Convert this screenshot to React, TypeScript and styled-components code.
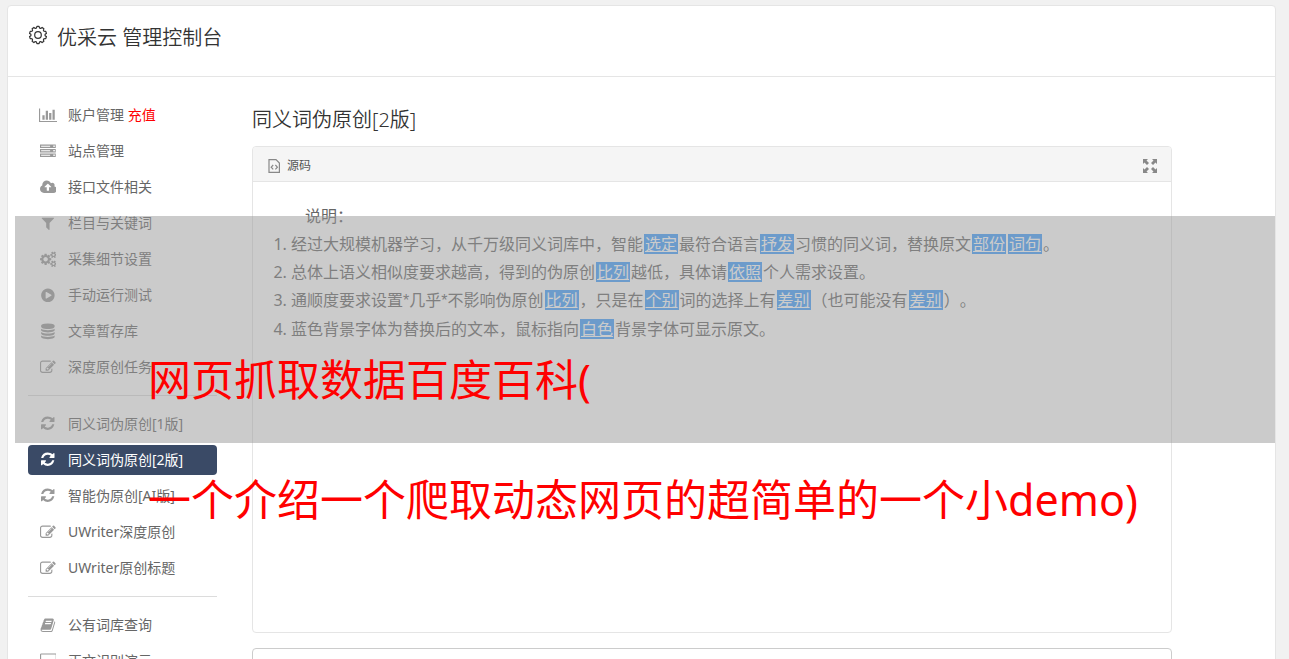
import React from "react";
import styled, { createGlobalStyle, css } from "styled-components";

const GlobalStyle = createGlobalStyle`
  * { box-sizing: border-box; }
  html { height: 100%; overflow: hidden; }
  body {
    margin: 0;
    height: 100%;
    background: #f1f1f1;
    color: #666;
    font: 14px/20px "Noto Sans", "Noto Sans CJK SC", sans-serif;
    text-spacing-trim: space-all;
  }
  h1, h2, p, ul, ol { margin: 0; padding: 0; }
`;

const Page = styled.div`
  position: relative;
  padding: 5px 13px 0 7px;
`;

const Shell = styled.div`
  background: #fff;
  border: 1px solid #e5e5e5;
  border-radius: 4px;
`;

const Header = styled.header`
  display: flex;
  align-items: flex-start;
  gap: 9px;
  padding: 19px 20px 0;
  height: 71px;
  border-bottom: 1px solid #e5e5e5;
  color: #333;
`;

const HeaderTitle = styled.h1`
  font-size: 20px;
  font-weight: 350;
  line-height: 26px;
`;

const Body = styled.div`
  display: flex;
  gap: 35px;
  padding: 20px 103px 0 20px;
`;

const Sidebar = styled.nav`
  flex: 0 0 189px;
`;

const NavGroup = styled.ul`
  display: flex;
  flex-direction: column;
  gap: 6px;
  list-style: none;
  padding: 3px 0 13px;

  & + & {
    border-top: 1px solid #dcdcdc;
    padding-top: 13px;
  }
`;

const NavLink = styled.a<{ $active?: boolean }>`
  display: flex;
  align-items: center;
  gap: 10px;
  height: 30px;
  padding: 0 10px;
  border-radius: 4px;
  color: #666;
  text-decoration: none;
  white-space: nowrap;
  svg { color: #999; }
  ${(p) =>
    p.$active &&
    css`
      background: #3a4a66;
      color: #fff;
      svg { color: #fff; }
    `}
`;

const Recharge = styled.span`
  color: #f00;
`;

const IconBox = styled.span`
  display: flex;
  justify-content: center;
  width: 20px;
`;

const Main = styled.main`
  flex: 1;
  min-width: 0;
  padding-top: 10px;
`;

const PageTitle = styled.h2`
  color: #333;
  font-size: 20px;
  font-weight: 350;
  line-height: 26px;
`;

const Panel = styled.section`
  margin-top: 13px;
  border: 1px solid #e5e5e5;
  border-radius: 4px;
`;

const PanelBar = styled.div`
  display: flex;
  align-items: center;
  justify-content: space-between;
  height: 35px;
  padding: 3px 14px 0;
  background: #f5f5f5;
  border-bottom: 1px solid #e5e5e5;
  border-radius: 3px 3px 0 0;
`;

const BarButton = styled.button`
  display: flex;
  align-items: center;
  gap: 6px;
  border: 0;
  padding: 0;
  background: none;
  color: #555;
  font: inherit;
  font-size: 12px;
  svg { color: #888; }
`;

const Article = styled.div`
  min-height: 450px;
  padding: 20px 20px 0;
  font-size: 16px;
  line-height: 28px;
`;

const Lead = styled.p`
  text-indent: 2em;
`;

const Rules = styled.ol`
  padding-left: 18px;
`;

const Star = styled.span`
  font-family: "Liberation Sans", sans-serif;
`;

const Swap = styled.u`
  margin: 0 1px;
  padding: 0 1px;
  background: #409eff;
  color: #fff;
  line-height: 20px;
  display: inline-block;
`;

const ResultBox = styled.textarea`
  display: block;
  width: 100%;
  height: 120px;
  margin-top: 15px;
  border: 1px solid #ccc;
  border-radius: 4px;
  resize: none;
`;

const Veil = styled.div`
  position: absolute;
  top: 216px;
  left: 15px;
  right: 14px;
  height: 227px;
  background: rgba(151, 151, 151, 0.5);
  pointer-events: none;
`;

const Caption = styled.p`
  position: absolute;
  top: 320px;
  left: 148px;
  color: #f00;
  font-size: 43px;
  line-height: 120px;
  white-space: nowrap;
  pointer-events: none;
`;

type Glyph = { w: number; d: string };

const glyphs: Record<string, Glyph> = {
  chart: { w: 2048, d: "M640 896v512h-256v-512h256zm384-512v1024h-256v-1024h256zm1024 1152v128h-2048v-1536h128v1408h1920zm-640-896v768h-256v-768h256zm384-384v1152h-256v-1152h256z" },
  server: { w: 1792, d: "M128 1408h1024v-128h-1024v128zm0-512h1024v-128h-1024v128zm1568 448q0-40-28-68t-68-28-68 28-28 68 28 68 68 28 68-28 28-68zm-1568-960h1024v-128h-1024v128zm1568 448q0-40-28-68t-68-28-68 28-28 68 28 68 68 28 68-28 28-68zm0-512q0-40-28-68t-68-28-68 28-28 68 28 68 68 28 68-28 28-68zm96 832v384h-1792v-384h1792zm0-512v384h-1792v-384h1792zm0-512v384h-1792v-384h1792z" },
  cloud: { w: 1920, d: "M1280 864q0-14-9-23l-352-352q-9-9-23-9t-23 9l-351 351q-10 12-10 24 0 14 9 23t23 9h224v352q0 13 9.500 22.500t22.500 9.500h192q13 0 22.500-9.500t9.500-22.500v-352h224q13 0 22.500-9.500t9.500-22.500zm640 288q0 159-112.500 271.500t-271.500 112.500h-1088q-185 0-316.500-131.500t-131.500-316.500q0-130 70-240t188-165q-2-30-2-43 0-212 150-362t362-150q156 0 285.500 87t188.500 231q71-62 166-62 106 0 181 75t75 181q0 76-41 138 130 31 213.500 135.500t83.500 238.500z" },
  filter: { w: 1792, d: "M1595 295q17 41-14 70l-493 493v742q0 42-39 59-13 5-25 5-27 0-45-19l-256-256q-19-19-19-45v-486l-493-493q-31-29-14-70 17-39 59-39h1280q42 0 59 39z" },
  cogs: { w: 1920, d: "M896 896q0-106-75-181t-181-75-181 75-75 181 75 181 181 75 181-75 75-181zm768 512q0-52-38-90t-90-38-90 38-38 90q0 53 37.500 90.500t90.500 37.500 90.500-37.500 37.500-90.500zm0-1024q0-52-38-90t-90-38-90 38-38 90q0 53 37.500 90.500t90.500 37.500 90.500-37.500 37.500-90.500zm-384 421v185q0 10-7 19.500t-16 10.500l-155 24q-11 35-32 76 34 48 90 115 7 11 7 20 0 12-7 19-23 30-82.500 89.500t-78.500 59.500q-11 0-21-7l-115-90q-37 19-77 31-11 108-23 155-7 24-30 24h-186q-11 0-20-7.500t-10-17.500l-23-153q-34-10-75-31l-118 89q-7 7-20 7-11 0-21-8-144-133-144-160 0-9 7-19 10-14 41-53t47-61q-23-44-35-82l-152-24q-10-1-17-9.500t-7-19.500v-185q0-10 7-19.500t16-10.500l155-24q11-35 32-76-34-48-90-115-7-11-7-20 0-12 7-20 22-30 82-89t79-59q11 0 21 7l115 90q34-18 77-32 11-108 23-154 7-24 30-24h186q11 0 20 7.500t10 17.500l23 153q34 10 75 31l118-89q8-7 20-7 11 0 21 8 144 133 144 160 0 8-7 19-12 16-42 54t-45 60q23 48 34 82l152 23q10 2 17 10.500t7 19.500zm640 533v140q0 16-149 31-12 27-30 52 51 113 51 138 0 4-4 7-122 71-124 71-8 0-46-47t-52-68q-20 2-30 2t-30-2q-14 21-52 68t-46 47q-2 0-124-71-4-3-4-7 0-25 51-138-18-25-30-52-149-15-149-31v-140q0-16 149-31 13-29 30-52-51-113-51-138 0-4 4-7 4-2 35-20t59-34 30-16q8 0 46 46.500t52 67.500q20-2 30-2t30 2q51-71 92-112l6-2q4 0 124 70 4 3 4 7 0 25-51 138 17 23 30 52 149 15 149 31zm0-1024v140q0 16-149 31-12 27-30 52 51 113 51 138 0 4-4 7-122 71-124 71-8 0-46-47t-52-68q-20 2-30 2t-30-2q-14 21-52 68t-46 47q-2 0-124-71-4-3-4-7 0-25 51-138-18-25-30-52-149-15-149-31v-140q0-16 149-31 13-29 30-52-51-113-51-138 0-4 4-7 4-2 35-20t59-34 30-16q8 0 46 46.500t52 67.500q20-2 30-2t30 2q51-71 92-112l6-2q4 0 124 70 4 3 4 7 0 25-51 138 17 23 30 52 149 15 149 31z" },
  play: { w: 1792, d: "M896 128q209 0 385.500 103t279.500 279.500 103 385.500-103 385.500-279.500 279.500-385.500 103-385.500-103-279.500-279.500-103-385.500 103-385.500 279.500-279.500 385.500-103zm384 823q32-18 32-55t-32-55l-544-320q-31-19-64-1-32 19-32 56v640q0 37 32 56 16 8 32 8 17 0 32-9z" },
  database: { w: 1792, d: "M896 768q237 0 443-43t325-127v170q0 69-103 128t-280 93.500-385 34.500-385-34.500-280-93.500-103-128v-170q119 84 325 127t443 43zm0 768q237 0 443-43t325-127v170q0 69-103 128t-280 93.500-385 34.500-385-34.500-280-93.500-103-128v-170q119 84 325 127t443 43zm0-384q237 0 443-43t325-127v170q0 69-103 128t-280 93.500-385 34.500-385-34.500-280-93.500-103-128v-170q119 84 325 127t443 43zm0-1152q208 0 385 34.500t280 93.500 103 128v128q0 69-103 128t-280 93.500-385 34.500-385-34.500-280-93.500-103-128v-128q0-69 103-128t280-93.500 385-34.500z" },
  edit: { w: 1792, d: "M888 1184l116-116-152-152-116 116v56h96v96h56zm440-720q-16-16-33 1l-350 350q-17 17-1 33t33-1l350-350q17-17 1-33zm80 594v190q0 119-84.500 203.500t-203.500 84.500h-832q-119 0-203.500-84.500t-84.500-203.500v-832q0-119 84.500-203.500t203.500-84.500h832q63 0 117 25 15 7 18 23 3 17-9 29l-49 49q-14 14-32 8-23-6-45-6h-832q-66 0-113 47t-47 113v832q0 66 47 113t113 47h832q66 0 113-47t47-113v-126q0-13 9-22l64-64q15-15 35-7t20 29zm-96-738l288 288-672 672h-288v-288zm444 132l-92 92-288-288 92-92q28-28 68-28t68 28l152 152q28 28 28 68t-28 68z" },
  refresh: { w: 1536, d: "M1511 928q0 5-1 7-64 268-268 434.500t-478 166.500q-146 0-282.500-55t-243.500-157l-129 129q-19 19-45 19t-45-19-19-45v-448q0-26 19-45t45-19h448q26 0 45 19t19 45-19 45l-137 137q71 66 161 102t187 36q134 0 250-65t186-179q11-17 53-117 8-23 30-23h192q13 0 22.500 9.500t9.500 22.500zm25-800v448q0 26-19 45t-45 19h-448q-26 0-45-19t-19-45 19-45l138-138q-148-137-349-137-134 0-250 65t-186 179q-11 17-53 117-8 23-30 23h-199q-13 0-22.500-9.500t-9.500-22.500v-7q65-268 270-434.500t480-166.500q146 0 284 55.500t245 156.500l130-129q19-19 45-19t45 19 19 45z" },
  book: { w: 1792, d: "M1703 478q40 57 18 129l-275 906q-19 64-76.500 107.500t-122.500 43.500h-923q-77 0-148.500-53.500t-99.500-131.500q-24-67-2-127 0-4 3-27t4-37q1-8-3-21.500t-3-19.500q2-11 8-21t16.500-23.500 16.500-23.500q23-38 45-91.500t30-91.500q3-10 .5-30t-.5-28q3-11 17-28t17-23q21-36 42-92t25-90q1-9-2.500-32t.5-28q4-13 22-30.500t22-22.500q19-26 42.500-84.500t27.500-96.500q1-8-3-25.500t-2-26.500q2-8 9-18t18-23 17-21q8-12 16.500-30.500t15-35 16-36 19.500-32 26.500-23.500 36-11.500 47.500 5.500l-1 3q38-9 51-9h761q74 0 114 56t18 130l-274 906q-36 119-71.500 153.500t-128.500 34.500h-869q-27 0-38 15-11 16-1 43 24 70 144 70h923q29 0 56-15.500t35-41.500l300-987q7-22 5-57 38 15 59 43zm-1064 2q-4 13 2 22.500t20 9.500h608q13 0 25.500-9.500t16.500-22.500l21-64q4-13-2-22.500t-20-9.500h-608q-13 0-25.500 9.500t-16.500 22.500zm-83 256q-4 13 2 22.500t20 9.500h608q13 0 25.500-9.500t16.500-22.500l21-64q4-13-2-22.500t-20-9.500h-608q-13 0-25.500 9.500t-16.500 22.500z" },
  desktop: { w: 1920, d: "M1792 992v-832q0-13-9.500-22.500t-22.500-9.500h-1600q-13 0-22.500 9.500t-9.500 22.500v832q0 13 9.500 22.500t22.500 9.500h1600q13 0 22.500-9.500t9.500-22.500zm128-832v1088q0 66-47 113t-113 47h-544q0 37 16 77.500t32 71 16 43.500q0 26-19 45t-45 19h-512q-26 0-45-19t-19-45q0-14 16-44t32-70 16-78h-544q-66 0-113-47t-47-113v-1088q0-66 47-113t113-47h1600q66 0 113 47t47 113z" },
};

const Icon = ({ name }: { name: string }) => {
  const g = glyphs[name];
  return (
    <svg width={(g.w * 18) / 2048} height="18" viewBox={`0 -160 ${g.w} 2048`} fill="currentColor" aria-hidden="true">
      <path d={g.d} />
    </svg>
  );
};

const teeth = Array.from({ length: 10 }, (_, i) => {
  const at = (deg: number, r: number) => {
    const a = (deg * Math.PI) / 180;
    return `${(10 + r * Math.sin(a)).toFixed(2)} ${(10 - r * Math.cos(a)).toFixed(2)}`;
  };
  const c = i * 36;
  return `${i ? "L" : "M"}${at(c - 7, 8.6)}L${at(c + 7, 8.6)}Q${at(c + 18, 5.4)} ${at(c + 29, 8.6)}`;
}).join("");

const GearIcon = () => (
  <svg width="20" height="20" viewBox="0 0 20 20" fill="none" stroke="currentColor" strokeWidth="1.2" strokeLinejoin="round" aria-hidden="true">
    <path d={teeth + "Z"} />
    <circle cx="10" cy="10" r="3.3" />
  </svg>
);

const SourceIcon = () => (
  <svg width="14" height="14" viewBox="0 0 14 14" fill="none" stroke="currentColor" strokeWidth="1.2" aria-hidden="true">
    <path d="M2 .6h7L12.400 4v9.400H2z M6.200 6L4.200 8.200l2 2.200M8.400 6l2 2.200-2 2.200" />
  </svg>
);

const ExpandIcon = () => (
  <svg width="14" height="14" viewBox="0 0 14 14" fill="currentColor" aria-hidden="true">
    <path d="M0 0h5L3.500 1.500l2.500 2.500-2 2L1.500 3.500 0 5zM14 0v5l-1.500-1.500L10 6 8 4l2.500-2.500L9 0zM0 14V9l1.500 1.500L4 8l2 2-2.500 2.500L5 14zM14 14H9l1.500-1.500L8 10l2-2 2.500 2.500L14 9z" />
  </svg>
);

type Item = { icon: string; label: string; extra?: string; active?: boolean };

const groups: Item[][] = [
  [
    { icon: "chart", label: "账户管理", extra: "充值" },
    { icon: "server", label: "站点管理" },
    { icon: "cloud", label: "接口文件相关" },
    { icon: "filter", label: "栏目与关键词" },
    { icon: "cogs", label: "采集细节设置" },
    { icon: "play", label: "手动运行测试" },
    { icon: "database", label: "文章暂存库" },
    { icon: "edit", label: "深度原创任务" },
  ],
  [
    { icon: "refresh", label: "同义词伪原创[1版]" },
    { icon: "refresh", label: "同义词伪原创[2版]", active: true },
    { icon: "refresh", label: "智能伪原创[AI版]" },
    { icon: "edit", label: "UWriter深度原创" },
    { icon: "edit", label: "UWriter原创标题" },
  ],
  [
    { icon: "book", label: "公有词库查询" },
    { icon: "desktop", label: "正文识别演示" },
  ],
];

export default function App() {
  return (
    <Page lang="zh-CN">
      <GlobalStyle />
      <Shell>
        <Header>
          <GearIcon />
          <HeaderTitle>优采云 管理控制台</HeaderTitle>
        </Header>
        <Body>
          <Sidebar>
            {groups.map((items, i) => (
              <NavGroup key={i}>
                {items.map((it) => (
                  <li key={it.label}>
                    <NavLink href="#" $active={it.active}>
                      <IconBox><Icon name={it.icon} /></IconBox>
                      <span>
                        {it.label}
                        {it.extra && <Recharge> {it.extra}</Recharge>}
                      </span>
                    </NavLink>
                  </li>
                ))}
              </NavGroup>
            ))}
          </Sidebar>
          <Main>
            <PageTitle>同义词伪原创[2版]</PageTitle>
            <Panel>
              <PanelBar>
                <BarButton type="button"><SourceIcon />源码</BarButton>
                <BarButton type="button" aria-label="全屏"><ExpandIcon /></BarButton>
              </PanelBar>
              <Article>
                <Lead>说明：</Lead>
                <Rules>
                  <li>经过大规模机器学习，从千万级同义词库中，智能<Swap>选定</Swap>最符合语言<Swap>抒发</Swap>习惯的同义词，替换原文<Swap>部份</Swap><Swap>词句</Swap>。</li>
                  <li>总体上语义相似度要求越高，得到的伪原创<Swap>比列</Swap>越低，具体请<Swap>依照</Swap>个人需求设置。</li>
                  <li>通顺度要求设置<Star>*</Star>几乎<Star>*</Star>不影响伪原创<Swap>比列</Swap>，只是在<Swap>个别</Swap>词的选择上有<Swap>差别</Swap>（也可能没有<Swap>差别</Swap>）。</li>
                  <li>蓝色背景字体为替换后的文本，鼠标指向<Swap>白色</Swap>背景字体可显示原文。</li>
                </Rules>
              </Article>
            </Panel>
            <ResultBox aria-label="结果" />
          </Main>
        </Body>
      </Shell>
      <Veil />
      <Caption>网页抓取数据百度百科(<br />一个介绍一个爬取动态网页的超简单的一个小demo)</Caption>
    </Page>
  );
}
